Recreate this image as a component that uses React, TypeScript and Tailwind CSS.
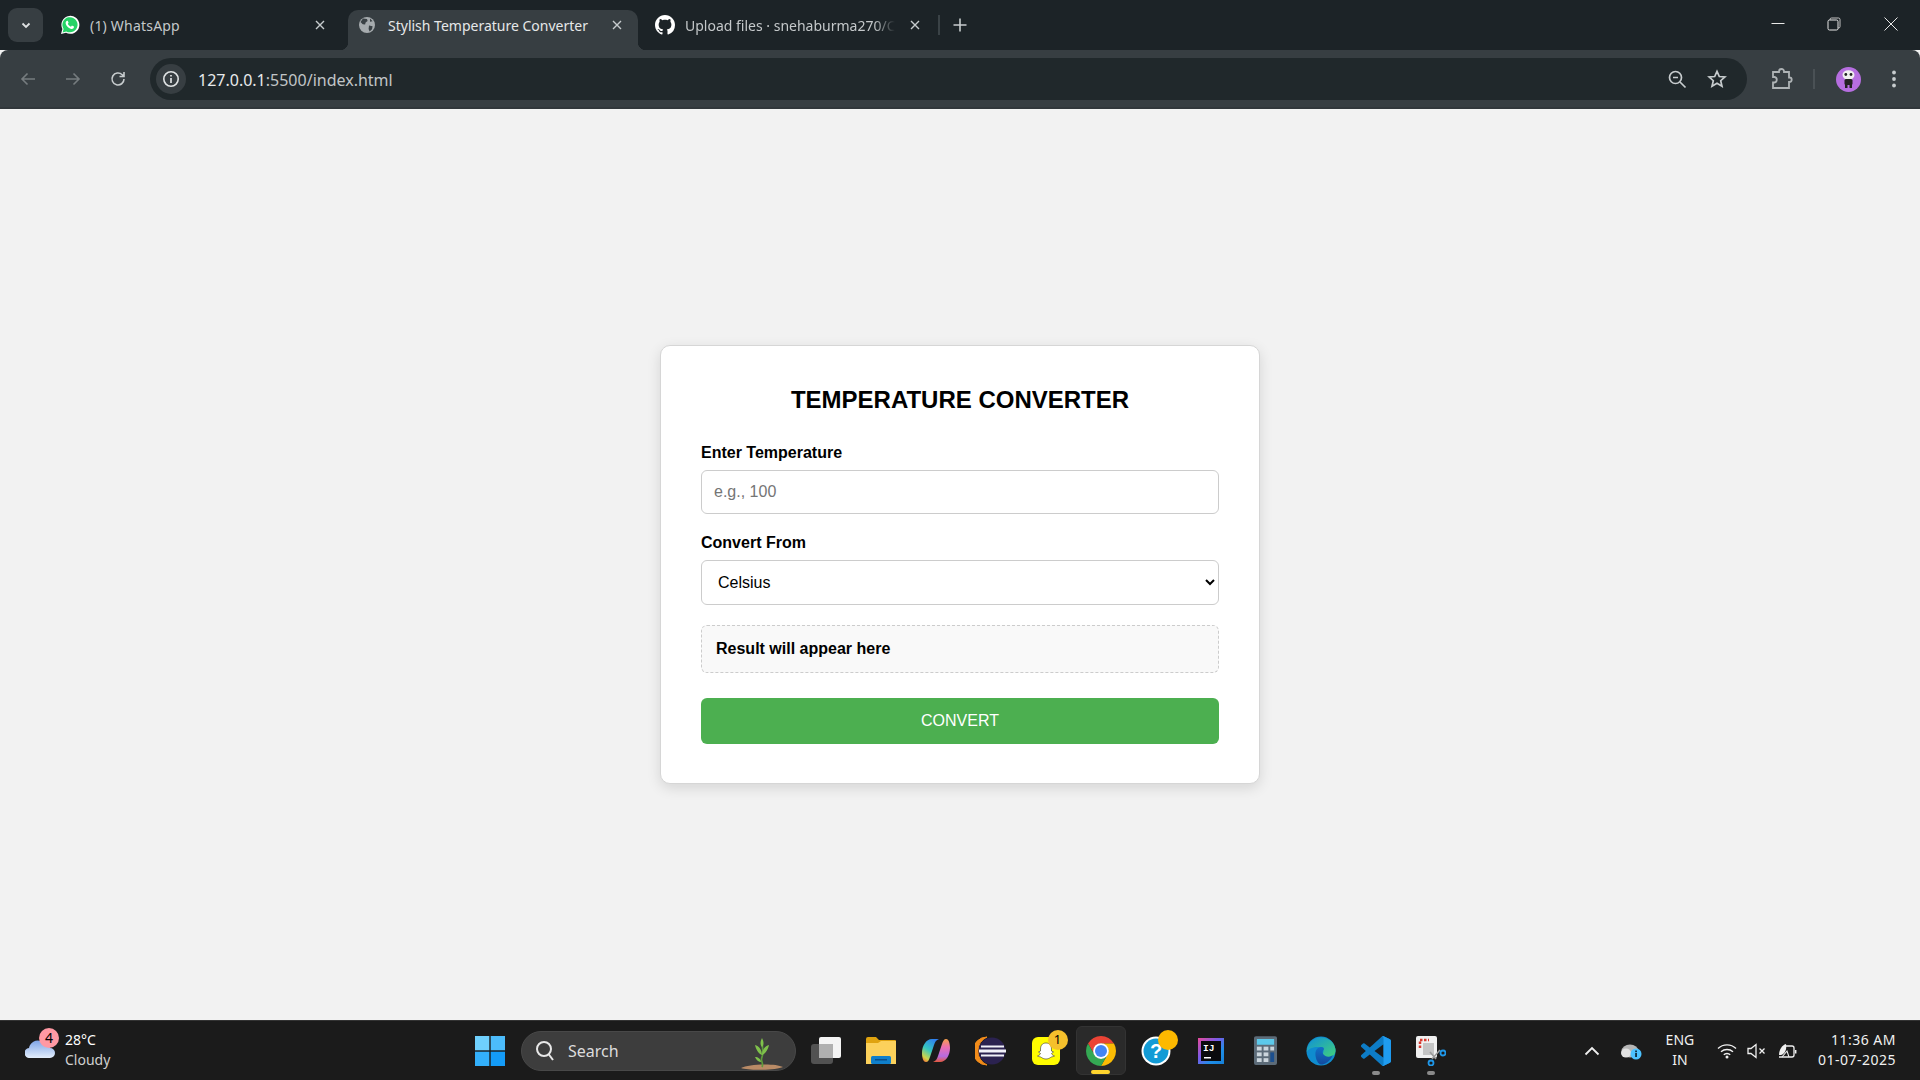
import React from "react";

const ui = { fontFamily: '"Noto Sans", "Open Sans", sans-serif' };
const arial = { fontFamily: '"Liberation Sans", Arial, sans-serif' };

function X({ className = "" }: { className?: string }) {
  return (
    <svg width="12" height="12" viewBox="0 0 12 12" className={className}>
      <path d="M2 2l8 8M10 2l-8 8" stroke="#c7ccce" strokeWidth="1.4" />
    </svg>
  );
}

function WhatsApp() {
  return (
    <svg width="20" height="20" viewBox="0 0 20 20">
      <path d="M1 19l1.400-5A9 9 0 1 1 6 17.700z" fill="#fff" />
      <path d="M2.600 17.400l1-3.500A7.600 7.600 0 1 1 6.300 16.400z" fill="#25d366" />
      <path d="M7.300 5.800c-.4 0-.9.2-1.200.7-.7 1-.6 2.300.4 3.900 1.200 1.800 3 3.200 4.900 3.500 1.200.2 2.400-.6 2.500-1.600l.1-.7-2.100-1-.9 1.100c-1.400-.5-2.600-1.700-3.200-3l.8-1-.9-2z" fill="#fff" />
    </svg>
  );
}

function Globe() {
  return (
    <svg width="18" height="18" viewBox="0 0 18 18">
      <circle cx="9" cy="9" r="8" fill="#a6abae" />
      <path d="M5 2.600l4 .4.6 2-2 1.600-.5 2-2.400-.4L2.500 6zM11 9.600l3.600.6-.6 3-2.400 2.200-1-2.400zM12 2.600l2.600 2.600-2.600.6z" fill="#3a4145" />
    </svg>
  );
}

function GitHub() {
  return (
    <svg width="20" height="20" viewBox="0 0 16 16">
      <path
        fill="#fff"
        d="M8 0C3.580 0 0 3.580 0 8c0 3.540 2.290 6.530 5.470 7.590.4.07.55-.17.55-.38 0-.19-.01-.82-.01-1.490-2.010.37-2.530-.49-2.690-.94-.09-.23-.48-.94-.82-1.130-.28-.15-.68-.52-.01-.53.63-.01 1.080.58 1.230.82.72 1.210 1.870.87 2.330.66.07-.52.28-.87.51-1.070-1.780-.2-3.640-.89-3.640-3.950 0-.87.31-1.590.82-2.150-.08-.2-.36-1.020.08-2.120 0 0 .67-.21 2.200.82.64-.18 1.320-.27 2-.27s1.360.09 2 .27c1.530-1.040 2.200-.82 2.200-.82.44 1.100.16 1.920.08 2.120.51.56.82 1.270.82 2.150 0 3.070-1.870 3.750-3.650 3.950.29.25.54.73.54 1.480 0 1.070-.01 1.930-.01 2.200 0 .21.15.46.55.38A8.010 8.010 0 0 0 16 8c0-4.420-3.580-8-8-8z"
      />
    </svg>
  );
}

function TabStrip() {
  return (
    <div className="h-[50px] shrink-0 bg-[#1c2327] flex items-start relative">
      <div className="ml-[8px] mt-[8px] w-[35px] h-[34px] rounded-[9px] bg-[#373e42] flex items-center justify-center">
        <svg width="12" height="12" viewBox="0 0 12 12">
          <path d="M2.500 4.500L6 8l3.500-3.500" stroke="#dfe2e3" strokeWidth="1.800" fill="none" />
        </svg>
      </div>
      <div className="ml-[17px] mt-[15px] w-[20px] h-[20px]">
        <WhatsApp />
      </div>
      <div className="ml-[10px] w-[236px] mt-[15px] h-[20px] flex items-center justify-between text-[14px] text-[#c4c8ca] tracking-[0.2px]" style={ui}>
        <span>(1) WhatsApp</span>
        <X />
      </div>
      <div className="ml-[22px] mt-[10px] w-[290px] h-[40px] rounded-t-[10px] bg-[#373e42] flex items-center pl-[10px] pr-[15px] pb-[10px] relative">
        <div className="absolute bottom-0 left-[-8px] w-[8px] h-[8px] bg-[radial-gradient(circle_at_0_0,transparent_8px,#373e42_8.500px)]" />
        <div className="absolute bottom-0 right-[-8px] w-[8px] h-[8px] bg-[radial-gradient(circle_at_100%_0,transparent_8px,#373e42_8.500px)]" />
        <Globe />
        <span className="ml-[12px] flex-1 text-[14px] text-[#e6e8e9] whitespace-nowrap" style={ui}>
          Stylish Temperature Converter
        </span>
        <X />
      </div>
      <div className="ml-[17px] mt-[15px] w-[20px] h-[20px]">
        <GitHub />
      </div>
      <div className="ml-[10px] mt-[15px] w-[236px] h-[20px] flex items-center text-[14px] text-[#c4c8ca]" style={ui}>
        <span className="w-[210px] shrink-0 whitespace-nowrap [mask-image:linear-gradient(to_right,black_90%,transparent)]">Upload files · snehaburma270/C</span>
        <X className="ml-[14px] shrink-0" />
      </div>
      <div className="ml-[17px] mt-[15px] w-[2px] h-[20px] bg-[#3a4246]" />
      <svg width="14" height="14" viewBox="0 0 14 14" className="ml-[13px] mt-[18px]">
        <path d="M7 0.500v13M0.500 7h13" stroke="#c7ccce" strokeWidth="1.600" />
      </svg>
      <div className="ml-auto flex h-[48px] items-center">
        <svg width="14" height="14" viewBox="0 0 14 14" className="mr-[42px]">
          <path d="M0.500 6.500h13" stroke="#e8e8e8" strokeWidth="1" />
        </svg>
        <svg width="14" height="14" viewBox="0 0 14 14" className="mr-[43px]">
          <path d="M3 3V2.500A1.500 1.500 0 0 1 4.500 1h7A1.500 1.500 0 0 1 13 2.500v7A1.500 1.500 0 0 1 11.500 11H11" stroke="#c4c4c4" fill="none" />
          <rect x="1" y="3" width="10" height="10" rx="1.500" stroke="#e8e8e8" fill="none" />
        </svg>
        <svg width="14" height="14" viewBox="0 0 14 14" className="mr-[22px]">
          <path d="M0.500 0.500l13 13M13.500 0.500l-13 13" stroke="#e8e8e8" strokeWidth="1" />
        </svg>
      </div>
    </div>
  );
}

function Toolbar() {
  return (
    <div className="h-[59px] pt-px bg-[#373e42] rounded-t-[8px] flex items-center shrink-0 relative border-b-2 border-[#31373b]">
      <svg width="18" height="18" viewBox="0 0 18 18" className="ml-[19px]">
        <path d="M16 9H3M8.500 3.500L3 9l5.500 5.500" stroke="#767c7f" strokeWidth="1.600" fill="none" />
      </svg>
      <svg width="18" height="18" viewBox="0 0 18 18" className="ml-[27px]">
        <path d="M2 9h13M9.500 3.500L15 9l-5.500 5.500" stroke="#767c7f" strokeWidth="1.600" fill="none" />
      </svg>
      <svg width="18" height="18" viewBox="0 0 18 18" className="ml-[27px]">
        <path d="M15 9a6 6 0 1 1-1.800-4.300L15 6.500M15 2v4.500h-4.500" stroke="#c7ccce" strokeWidth="1.600" fill="none" />
      </svg>
      <div className="ml-[23px] w-[1597px] h-[42px] rounded-full bg-[#20282b] flex items-center">
        <div className="ml-[6px] w-[30px] h-[30px] rounded-full bg-[#373e42] flex items-center justify-center">
          <svg width="18" height="18" viewBox="0 0 18 18">
            <circle cx="9" cy="9" r="7.200" stroke="#dfe2e3" strokeWidth="1.600" fill="none" />
            <path d="M9 8v5M9 5v1.600" stroke="#dfe2e3" strokeWidth="1.700" />
          </svg>
        </div>
        <span className="ml-[12px] mt-[1px] text-[16px] text-[#e8eaeb]" style={ui}>
          127.0.0.1<span className="text-[#c0c5c7]">:5500/index.html</span>
        </span>
        <div className="ml-auto flex items-center">
          <svg width="20" height="20" viewBox="0 0 20 20" className="mr-[20px]">
            <circle cx="8.500" cy="8.500" r="6" stroke="#c7ccce" strokeWidth="1.700" fill="none" />
            <path d="M6 8.500h5M13 13l5.500 5.500" stroke="#c7ccce" strokeWidth="1.700" />
          </svg>
          <svg width="20" height="20" viewBox="0 0 20 20" className="mr-[20px]">
            <path d="M10 2.300l2.300 5.200 5.600.5-4.200 3.700 1.300 5.500L10 14.300l-5 2.900 1.300-5.500L2.100 8l5.600-.5z" stroke="#c7ccce" strokeWidth="1.700" fill="none" />
          </svg>
        </div>
      </div>
      <svg width="22" height="22" viewBox="0 0 22 22" className="ml-[24px]">
        <path d="M2 4h6V3.500a2.500 2.500 0 0 1 5 0V4h5v5.500h.5a2.200 2.200 0 0 1 0 4.400H18V20H2v-5.500h1.500a2.800 2.800 0 0 0 0-5.500H2z" stroke="#aeb3b5" strokeWidth="1.800" fill="none" />
      </svg>
      <div className="ml-[20px] w-[2px] h-[20px] bg-[#4a5155]" />
      <div className="ml-[21px] w-[25px] h-[25px] rounded-full bg-[#b66ee0] flex items-center justify-center">
        <svg width="17" height="20" viewBox="0 0 17 20">
          <ellipse cx="8.500" cy="6" rx="6" ry="4.800" fill="#efefef" />
          <circle cx="5.800" cy="5.500" r="1.400" fill="#222" />
          <circle cx="11" cy="5.500" r="1.400" fill="#222" />
          <rect x="4.500" y="10" width="8" height="6" rx="1.500" fill="#222" />
          <rect x="5" y="15" width="2.500" height="4" fill="#222" />
          <rect x="9.500" y="15" width="2.500" height="4" fill="#222" />
        </svg>
      </div>
      <svg width="6" height="20" viewBox="0 0 6 20" className="ml-[30px]">
        <circle cx="3" cy="3.500" r="1.900" fill="#c7ccce" />
        <circle cx="3" cy="10" r="1.900" fill="#c7ccce" />
        <circle cx="3" cy="16.500" r="1.900" fill="#c7ccce" />
      </svg>
    </div>
  );
}

function Card() {
  return (
    <div className="w-[600px] h-[439px] bg-white border border-[#d6d6d6] rounded-[10px] p-[40px] shadow-[0_4px_14px_rgba(0,0,0,0.12)]" style={arial}>
      <h2 className="text-[24px] leading-[28px] font-bold text-black text-center h-[28px] mb-[30px]">TEMPERATURE CONVERTER</h2>
      <label className="block text-[16px] leading-[18px] font-bold text-black mb-[8px]">Enter Temperature</label>
      <input
        placeholder="e.g., 100"
        className="block w-full h-[44px] px-[12px] text-[16px] border border-[#cccccc] rounded-[6px] bg-white placeholder:text-[#757575] outline-none"
        style={arial}
        readOnly
      />
      <label className="block mt-[20px] text-[16px] leading-[18px] font-bold text-black mb-[8px]">Convert From</label>
      <select
        className="block w-full h-[45px] px-[12px] text-[16px] text-black border border-[#cccccc] rounded-[6px] bg-white outline-none"
        style={arial}
        defaultValue="Celsius"
      >
        <option>Celsius</option>
        <option>Fahrenheit</option>
        <option>Kelvin</option>
      </select>
      <div className="mt-[20px] h-[48px] px-[14px] flex items-center text-[16px] font-bold text-black bg-[#f9f9f9] border border-dashed border-[#cccccc] rounded-[6px]">
        Result will appear here
      </div>
      <button className="block mt-[25px] w-full h-[46px] bg-[#4caf50] text-white text-[16px] rounded-[6px]" style={arial}>
        CONVERT
      </button>
    </div>
  );
}

function Slot({ children }: { children: React.ReactNode }) {
  return <div className="w-[55px] flex justify-center">{children}</div>;
}

function Dot() {
  return <div className="absolute bottom-[-9px] w-[8px] h-[4px] rounded-full bg-[#8a8a8a]" />;
}

function Taskbar() {
  return (
    <div className="h-[60px] shrink-0 bg-[#1b1b1b] border-t border-[#333] flex items-center relative" style={ui}>
      <div className="flex items-center ml-[25px] w-[450px] relative">
        <svg width="30" height="20" viewBox="0 0 30 20" className="mb-[6px]">
          <defs>
            <linearGradient id="cloud" x1="0" y1="0" x2="0" y2="1">
              <stop offset="0" stopColor="#7fa4e6" />
              <stop offset="1" stopColor="#e3eefc" />
            </linearGradient>
          </defs>
          <path d="M5 20a5 5 0 0 1-1-10 9 9 0 0 1 12-7 8 8 0 0 1 9 7 5 5 0 0 1 0 10z" fill="url(#cloud)" />
        </svg>
        <div className="ml-[10px] mb-[2px] flex flex-col text-[14px] leading-[20px]">
          <span className="text-white">28°C</span>
          <span className="text-[#cfcfcf]">Cloudy</span>
        </div>
        <div className="absolute left-[14px] top-[-2px] w-[20px] h-[20px] rounded-full bg-[#ff99a4] flex items-center justify-center text-[14px] text-black">4</div>
      </div>
      <svg width="30" height="30" viewBox="0 0 30 30" className="shrink-0">
        <rect x="0" y="0" width="14.300" height="14.300" fill="#6fd0fd" />
        <rect x="15.700" y="0" width="14.300" height="14.300" fill="#4cbcfb" />
        <rect x="0" y="15.700" width="14.300" height="14.300" fill="#33b0fb" />
        <rect x="15.700" y="15.700" width="14.300" height="14.300" fill="#149cf8" />
      </svg>
      <div className="ml-[16px] w-[275px] h-[40px] rounded-full bg-[#3d3d3d] border border-[#484848] flex items-center relative">
        <svg width="20" height="22" viewBox="0 0 20 22" className="ml-[13px]">
          <circle cx="9" cy="9" r="7" stroke="#e8e8e8" strokeWidth="2" fill="none" />
          <path d="M13.500 14l4.500 6" stroke="#e8e8e8" strokeWidth="2" />
        </svg>
        <span className="ml-[13px] text-[16px] text-[#dcdcdc]">Search</span>
        <svg width="44" height="32" viewBox="0 0 44 32" className="absolute right-[11px] top-[6px]">
          <path d="M1 30c8-4 34-5 42-1-6 3-34 4-42 1z" fill="#b98b66" />
          <path d="M22 29c2-4-2-6 0-10s0-10 0-17" stroke="#5d9a3b" strokeWidth="1.700" fill="none" />
          <path d="M22 17c-3-1-6-5-7-10 4 1 7 5 7 10zM22 17c3-1 6-5 7-10-4 1-7 5-7 10zM22 9c-2-2-2-5 0-9 2 4 2 7 0 9zM21 24c-2 0-5-2-6-5 3 0 6 2 6 5z" fill="#7fc14b" />
        </svg>
      </div>
      <div className="ml-[2px] flex items-center">
        <Slot>
          <svg width="30" height="28" viewBox="0 0 30 28">
            <rect x="0" y="7" width="22" height="20" rx="3" fill="#525252" />
            <rect x="8" y="0" width="22" height="21" rx="2" fill="#f4f4f4" />
            <rect x="8" y="7" width="14" height="14" fill="#b0b0b0" />
          </svg>
        </Slot>
        <Slot>
          <svg width="30" height="27" viewBox="0 0 30 27">
            <path d="M0 2a2 2 0 0 1 2-2h8l3 3h16a1 1 0 0 1 1 1v20H0z" fill="#e0a30f" />
            <path d="M0 6h12l3-2h15v23H0z" fill="#fcd15b" />
            <rect x="5" y="19" width="20" height="8" rx="1.500" fill="#0f7fcb" />
            <rect x="9" y="22" width="12" height="1.500" fill="#0a4f8a" />
          </svg>
        </Slot>
        <Slot>
          <svg width="28" height="25" viewBox="0 0 28 25">
            <defs>
              <linearGradient id="copa" x1="0.700" y1="0" x2="0.200" y2="1">
                <stop offset="0" stopColor="#2f7ff0" />
                <stop offset="0.500" stopColor="#35c7c0" />
                <stop offset="0.850" stopColor="#cfd64a" />
                <stop offset="1" stopColor="#f0803a" />
              </linearGradient>
              <linearGradient id="copb" x1="0.500" y1="0" x2="0.500" y2="1">
                <stop offset="0" stopColor="#f5a04a" />
                <stop offset="0.350" stopColor="#ee6fb0" />
                <stop offset="0.750" stopColor="#b66be0" />
                <stop offset="1" stopColor="#e5583a" />
              </linearGradient>
            </defs>
            <path d="M10 1h7c-3 1-4 3-5 6L8 19c-1 3-2 5-4 5-3 0-4-5-4-9C0 8 4 1 10 1z" fill="url(#copa)" />
            <path d="M18 24h-7c3-1 4-3 5-6l4-12c1-3 2-5 4-5 3 0 4 5 4 9 0 7-4 14-10 14z" fill="url(#copb)" />
          </svg>
        </Slot>
        <Slot>
          <svg width="32" height="30" viewBox="0 0 32 30">
            <path d="M12 1A14 14 0 0 0 12 29 15.500 15.500 0 0 1 12 1z" fill="#f28c1a" stroke="#f28c1a" />
            <circle cx="17" cy="15" r="13.500" fill="#2b2250" />
            <rect x="6" y="9.500" width="23" height="2" fill="#f1f1f8" />
            <rect x="4" y="13.500" width="27" height="3" fill="#f1f1f8" />
            <rect x="6" y="18.500" width="23" height="2" fill="#f1f1f8" />
          </svg>
        </Slot>
        <Slot>
          <div className="relative w-[28px] h-[28px]">
            <svg width="28" height="28" viewBox="0 0 28 28">
              <rect x="0" y="0" width="28" height="28" rx="6" fill="#fffc00" />
              <path d="M14 6c4 0 5.500 3 5.500 6v2l2 1-2 1.500c.5 1.500 2 2 3 2.500-1.500 1-3 .5-4 1.500-1.500 1-3 1.500-4.500 1.500s-3-.5-4.500-1.500c-1-1-2.500-.5-4-1.500 1-.5 2.500-1 3-2.500l-2-1.500 2-1v-2c0-3 1.500-6 5.500-6z" fill="#fff" stroke="#333" strokeWidth="0.600" />
            </svg>
            <div className="absolute right-[-8px] top-[-7px] w-[20px] h-[20px] rounded-full bg-[#f5c02c] text-[13px] text-black flex items-center justify-center">1</div>
          </div>
        </Slot>
        <div className="w-[50px] h-[49px] rounded-[6px] bg-[#2a2a2a] border border-[#333] flex items-center justify-center relative mx-[2.500px]">
          <svg width="30" height="30" viewBox="4 4 40 40">
            <path d="M6.680 14A20 20 0 0 1 41.320 14H24A10 10 0 0 0 15.340 29z" fill="#ea4335" />
            <path d="M41.320 14A20 20 0 0 1 24 44L32.660 29A10 10 0 0 0 24 14z" fill="#fbbc04" />
            <path d="M24 44A20 20 0 0 1 6.680 14L15.340 29A10 10 0 0 0 32.660 29z" fill="#34a853" />
            <circle cx="24" cy="24" r="10.500" fill="#fff" />
            <circle cx="24" cy="24" r="8" fill="#4285f4" />
          </svg>
          <div className="absolute bottom-[0px] w-[19px] h-[4px] rounded-full bg-[#ffd42e]" />
        </div>
        <Slot>
          <div className="relative w-[30px] h-[30px]">
            <svg width="30" height="30" viewBox="0 0 30 30">
              <circle cx="15" cy="15" r="14.500" fill="#fff" />
              <circle cx="15" cy="15" r="12.500" fill="#129bd6" />
              <text x="15" y="22" textAnchor="middle" fontSize="20" fontWeight="700" fill="#fff" fontFamily="Liberation Sans">?</text>
            </svg>
            <div className="absolute right-[-7px] top-[-6px] w-[20px] h-[20px] rounded-full bg-[#fdb900]" />
          </div>
        </Slot>
        <Slot>
          <svg width="26" height="26" viewBox="0 0 26 26">
            <defs>
              <linearGradient id="ij" x1="0" y1="0" x2="1" y2="1">
                <stop offset="0" stopColor="#e94a9a" />
                <stop offset="0.400" stopColor="#7a5be8" />
                <stop offset="0.700" stopColor="#1f8fe8" />
                <stop offset="1" stopColor="#1580d8" />
              </linearGradient>
            </defs>
            <rect x="0" y="0" width="26" height="26" fill="url(#ij)" />
            <rect x="3" y="3" width="20" height="20" fill="#0b0b0d" />
            <text x="5" y="13" fontSize="9.500" fill="#fff" fontWeight="700" fontFamily="Liberation Mono">IJ</text>
            <rect x="6" y="19" width="7" height="1.500" fill="#fff" />
          </svg>
        </Slot>
        <Slot>
          <svg width="23" height="29" viewBox="0 0 24 30">
            <rect x="0" y="0" width="24" height="30" rx="2" fill="#5c6b78" />
            <rect x="3" y="3" width="18" height="6" fill="#5cc9ea" />
            <rect x="3" y="11" width="5" height="4" fill="#cbd5dc" />
            <rect x="10" y="11" width="5" height="4" fill="#cbd5dc" />
            <rect x="17" y="11" width="4" height="4" fill="#cbd5dc" />
            <rect x="3" y="17" width="5" height="4" fill="#cbd5dc" />
            <rect x="10" y="17" width="5" height="4" fill="#cbd5dc" />
            <rect x="3" y="23" width="5" height="4" fill="#cbd5dc" />
            <rect x="10" y="23" width="5" height="4" fill="#cbd5dc" />
            <rect x="17" y="17" width="4" height="10" fill="#1b4f8f" />
          </svg>
        </Slot>
        <Slot>
          <svg width="30" height="30" viewBox="0 0 32 32">
            <defs>
              <linearGradient id="edgeA" x1="0" y1="0" x2="1" y2="1">
                <stop offset="0" stopColor="#0f8fd8" />
                <stop offset="1" stopColor="#43d27a" />
              </linearGradient>
              <linearGradient id="edgeB" x1="0" y1="0" x2="0" y2="1">
                <stop offset="0" stopColor="#1170c8" />
                <stop offset="1" stopColor="#134a9c" />
              </linearGradient>
            </defs>
            <circle cx="16" cy="16" r="15.500" fill="#0f8ccf" />
            <path d="M.8 17A15.500 15.500 0 0 1 31.500 14c.5 5-3 9-8 9-4 0-6-2-6-4 2-2 2-6-3-7-7-1-12 2-13.700 5z" fill="url(#edgeA)" />
            <path d="M10 19c0-5 4-8 8-7 2 1 1 3 0 4-1 2 1 6 6 6 2 0 4-1 5-2-3 7-9 10.500-13 10.500-3 0-6-6-6-11.500z" fill="url(#edgeB)" />
          </svg>
        </Slot>
        <div className="w-[55px] flex justify-center relative">
          <svg width="30" height="30" viewBox="0 0 100 100">
            <path
              fillRule="evenodd"
              fill="#0d7cc6"
              d="M70.900 99.300a6.200 6.200 0 0 0 4.900-.2l20.600-9.900a6.200 6.200 0 0 0 3.500-5.600V16.400a6.200 6.200 0 0 0-3.500-5.600L75.800.9a6.200 6.200 0 0 0-7.100 1.200L29.300 38.100 12 25a4.200 4.200 0 0 0-5.300.2L1.200 30.200a4.200 4.200 0 0 0 0 6.200L16.100 50 1.200 63.600a4.200 4.200 0 0 0 0 6.200l5.500 5a4.200 4.200 0 0 0 5.300.2l17.300-13.100 39.400 35.900a6.200 6.200 0 0 0 2.200 1.500zM75 27.300 45.100 50 75 72.700V27.300z"
            />
            <path fill="#1f9cf0" d="M70.900 99.300a6.200 6.200 0 0 0 4.900-.2l20.600-9.900a6.200 6.200 0 0 0 3.500-5.600V16.400a6.200 6.200 0 0 0-3.500-5.600L75.800.9a6.200 6.200 0 0 0-4.900-.2 6 6 0 0 1 4.100 6V93a6 6 0 0 1-4.100 6.300z" />
          </svg>
          <Dot />
        </div>
        <div className="w-[55px] flex justify-center relative">
          <svg width="30" height="30" viewBox="0 0 30 30">
            <rect x="0" y="0" width="21" height="22" rx="2" fill="#f0f0f0" />
            <path d="M4 12V4h9" stroke="#d8392f" strokeWidth="2.500" strokeDasharray="2.500 1.500" fill="none" />
            <rect x="7" y="7" width="11" height="12" fill="#c4c4c4" />
            <path d="M14 16l6 7M24 14l-8 9" stroke="#9a9a9a" strokeWidth="1.600" />
            <circle cx="15" cy="27" r="2.500" stroke="#1f97e8" strokeWidth="1.800" fill="none" />
            <circle cx="27" cy="17" r="2.500" stroke="#1f97e8" strokeWidth="1.800" fill="none" />
          </svg>
          <Dot />
        </div>
      </div>
      <div className="ml-auto flex items-center text-[#f0f0f0]">
        <svg width="16" height="10" viewBox="0 0 16 10">
          <path d="M1.500 8.500L8 2l6.500 6.500" stroke="#f0f0f0" strokeWidth="1.800" fill="none" />
        </svg>
        <svg width="22" height="18" viewBox="0 0 22 18" className="ml-[21px]">
          <ellipse cx="9" cy="9" rx="8.500" ry="6.500" fill="#b5b5b5" />
          <ellipse cx="5" cy="11" rx="5" ry="4.500" fill="#e2e2e2" />
          <circle cx="15" cy="12" r="5.500" fill="#4cc2ff" />
          <rect x="14.200" y="11" width="1.700" height="4" fill="#0a2535" />
          <rect x="14.200" y="8.500" width="1.700" height="1.700" fill="#0a2535" />
        </svg>
        <div className="ml-[21px] mb-[2px] w-[32px] text-center text-[14px] leading-[20px]">
          ENG
          <br />
          IN
        </div>
        <svg width="20" height="16" viewBox="0 0 20 16" className="ml-[21px]">
          <path d="M1 5.500a13 13 0 0 1 18 0M4 8.800a9 9 0 0 1 12 0M6.800 11.800a4.500 4.500 0 0 1 6.400 0" stroke="#f0f0f0" strokeWidth="1.400" fill="none" />
          <circle cx="10" cy="14" r="1.500" fill="#f0f0f0" />
        </svg>
        <svg width="20" height="16" viewBox="0 0 20 16" className="ml-[10px]">
          <path d="M1 5.500h3L9 1.500v13L4 10.500H1z" stroke="#f0f0f0" strokeWidth="1.300" fill="none" />
          <path d="M12.500 5.500l5 5M17.500 5.500l-5 5" stroke="#f0f0f0" strokeWidth="1.300" />
        </svg>
        <svg width="20" height="16" viewBox="0 0 20 16" className="ml-[10px]">
          <path d="M9 3H15a2 2 0 0 1 2 2v7a2 2 0 0 1-2 2H2" stroke="#f0f0f0" strokeWidth="1.300" fill="none" />
          <path d="M18.700 7v3.500" stroke="#f0f0f0" strokeWidth="1.500" />
          <path d="M2 12c0-5 3-10 7-11 1 5-1 10-5 11z" fill="#f0f0f0" />
          <path d="M5 14l5-6 2 6" stroke="#f0f0f0" strokeWidth="1.100" fill="none" />
        </svg>
        <div className="ml-[21px] mr-[24px] mb-[2px] text-right text-[14px] leading-[20px] tracking-[0.5px]">
          <div>11:36 AM</div>
          <div>01-07-2025</div>
        </div>
      </div>
    </div>
  );
}

export default function App() {
  return (
    <div className="w-[1920px] h-[1080px] flex flex-col overflow-hidden bg-[#f2f2f2]">
      <TabStrip />
      <Toolbar />
      <main className="flex-1 min-h-0 flex items-center justify-center">
        <Card />
      </main>
      <Taskbar />
    </div>
  );
}
